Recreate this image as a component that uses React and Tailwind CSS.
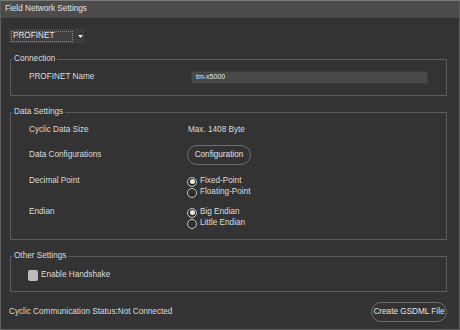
import React, { useState } from 'react';

function Radio({ checked, label }) {
    return (
        <div className='flex items-center h-[11px]'>
            <span className='w-[10px] h-[10px] rounded-full border border-[#c4c4c4] bg-[#2e2e2e] flex items-center justify-center'>
                {checked && <span className='w-[5px] h-[5px] rounded-full bg-[#e8e8e8]'></span>}
            </span>
            <span className='ml-[3px] text-[#dedede]'>{label}</span>
        </div>
    );
}

function Group({ title, className, children }) {
    return (
        <fieldset className={'border border-[#5c5c5c] ' + className}>
            <legend className='ml-[1px] px-[2px] h-[12px] leading-[12px] text-[#dcdcdc]'>{title}</legend>
            {children}
        </fieldset>
    );
}

export default function App() {
    const [decimal, setDecimal] = useState('fixed');
    const [endian, setEndian] = useState('big');

    return (
        <div className='w-[460px] h-[330px] bg-[#333333] border border-[#5e5e5e] border-t-[#7a7a7a] text-[8.2px] text-[#dcdcdc] flex flex-col' style={{ fontFamily: '"Liberation Sans", Arial, sans-serif' }}>
            <div className='h-[18px] bg-[#4b4b4b] border-b border-[#2e2e2e] flex items-center pl-[4px] text-[#e2e2e2]'>
                Field Network Settings
            </div>

            <div className='pl-[9px] pr-[12px] flex flex-col'>
                {/* protocol select */}
                <div className='mt-[10px] -ml-[1px] w-[75px] h-[14px] bg-[#3a3a3a] border border-[#444] flex items-center pl-[1px]'>
                    <div className='w-[62px] h-[11px] bg-[#404040] border border-dotted border-[#8a8a8a] flex items-center pl-[1px] text-[#e4e4e4]'>
                        PROFINET
                    </div>
                    <svg className='ml-[5px]' width='5' height='3' viewBox='0 0 5 3'>
                        <path d='M0 0 L5 0 L2.5 3 Z' fill='#e8e8e8' />
                    </svg>
                </div>

                <Group title='Connection' className='mt-[10px] h-[43px]'>
                    <div className='flex items-center h-[14px] mt-[5px] pl-[18px]'>
                        <span className='w-[162px]'>PROFINET Name</span>
                        <div className='w-[237px] h-[13px] bg-[#484848] border border-[#3c3c3c] flex items-center pl-[4px] text-[7px] text-[#e6e6e6]'>
                            tm-x5000
                        </div>
                    </div>
                </Group>

                <Group title='Data Settings' className='mt-[10px] h-[134px]'>
                    <div className='pl-[18px] flex flex-col'>
                        <div className='flex items-center h-[14px] mt-[5px]'>
                            <span className='w-[159px]'>Cyclic Data Size</span>
                            <span>Max. 1408 Byte</span>
                        </div>
                        <div className='flex items-center h-[20px] mt-[8px]'>
                            <span className='w-[158px]'>Data Configurations</span>
                            <button className='w-[64px] h-[20px] rounded-full border border-[#6e6e6e] text-[#e2e2e2]'>
                                Configuration
                            </button>
                        </div>
                        <div className='flex mt-[11px]'>
                            <span className='w-[158px] leading-[9px]'>Decimal Point</span>
                            <div className='flex flex-col'>
                                <div onClick={() => setDecimal('fixed')}><Radio checked={decimal === 'fixed'} label='Fixed-Point' /></div>
                                <div onClick={() => setDecimal('float')}><Radio checked={decimal === 'float'} label='Floating-Point' /></div>
                            </div>
                        </div>
                        <div className='flex mt-[9px]'>
                            <span className='w-[158px] leading-[9px]'>Endian</span>
                            <div className='flex flex-col'>
                                <div onClick={() => setEndian('big')}><Radio checked={endian === 'big'} label='Big Endian' /></div>
                                <div onClick={() => setEndian('little')}><Radio checked={endian === 'little'} label='Little Endian' /></div>
                            </div>
                        </div>
                    </div>
                </Group>

                <Group title='Other Settings' className='mt-[10px] h-[42px]'>
                    <div className='flex items-center h-[12px] mt-[7px] pl-[17px]'>
                        <span className='w-[10px] h-[11px] rounded-[2px] bg-[#bdbdbd]'></span>
                        <span className='ml-[3px]'>Enable Handshake</span>
                    </div>
                </Group>

                <div className='flex items-center justify-between mt-[10px] -ml-[1px]'>
                    <span>Cyclic Communication Status:Not Connected</span>
                    <button className='w-[76px] h-[20px] rounded-full border border-[#6e6e6e] text-[#e2e2e2]'>
                        Create GSDML File
                    </button>
                </div>
            </div>
        </div>
    );
}
